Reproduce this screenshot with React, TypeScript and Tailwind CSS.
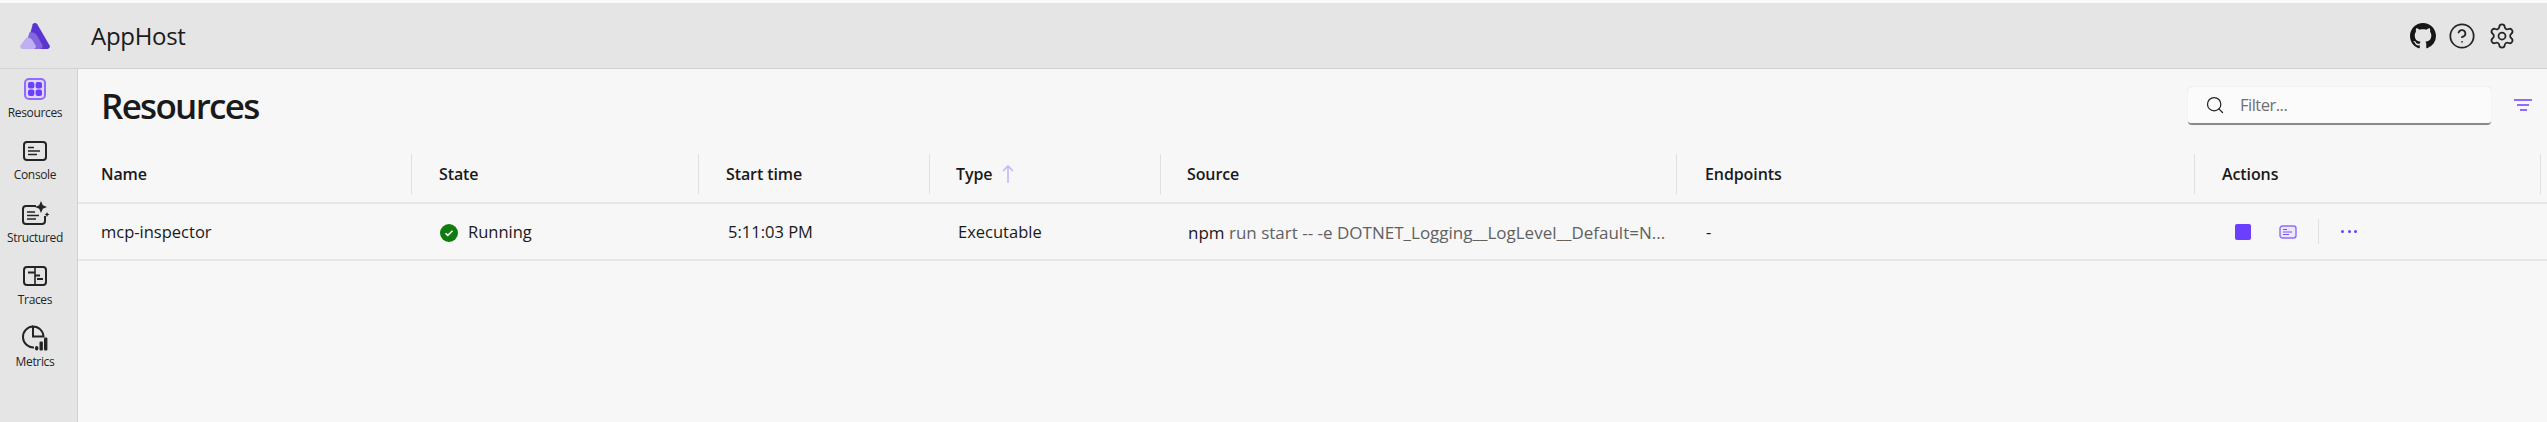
import { CircleHelp, Search, Settings } from "lucide-react";
import React from "react";

const gridCols =
  "grid grid-cols-[333px_287px_231px_231px_516px_518px_346px_1fr]";

const ResourcesIcon = () => (
  <svg width="24" height="24" viewBox="0 0 24 24" fill="none">
    <rect x="2" y="2" width="20" height="20" rx="4" stroke="#8f6bff" strokeWidth="2" fill="#e0d8fb" />
    <rect x="5" y="5" width="6.4" height="6.4" rx="2" fill="#6c3fff" />
    <rect x="12.6" y="5" width="6.4" height="6.4" rx="2" fill="#6c3fff" />
    <rect x="5" y="12.6" width="6.4" height="6.4" rx="2" fill="#6c3fff" />
    <rect x="12.6" y="12.6" width="6.4" height="6.4" rx="2" fill="#6c3fff" />
  </svg>
);

const ConsoleIcon = () => (
  <svg width="26" height="24" viewBox="0 0 26 24" fill="none" stroke="#242424" strokeWidth="2">
    <rect x="2" y="3" width="22" height="18" rx="3" />
    <path d="M6 8.5h6M6 12h12M6 15.5h9" strokeWidth="1.6" />
  </svg>
);

const StructuredIcon = () => (
  <svg width="30" height="26" viewBox="0 0 30 26" fill="none">
    <path d="M16 5H6a3 3 0 0 0-3 3v12a3 3 0 0 0 3 3h16a3 3 0 0 0 3-3v-5" stroke="#242424" strokeWidth="2" />
    <path d="M7 11h8M7 14.5h12M7 18h9" stroke="#242424" strokeWidth="1.6" />
    <path d="M21 0l1.8 4.2L27 6l-4.2 1.8L21 12l-1.8-4.2L15 6l4.2-1.8z" fill="#242424" />
    <path d="M27 11l.8 1.7 1.7.8-1.7.8-.8 1.7-.8-1.7-1.7-.8 1.7-.8z" fill="#242424" />
  </svg>
);

const TracesIcon = () => (
  <svg width="26" height="24" viewBox="0 0 26 24" fill="none" stroke="#242424" strokeWidth="2">
    <rect x="2" y="3" width="22" height="18" rx="3" />
    <path d="M13 3v18" strokeWidth="1.6" />
    <path d="M6 8.5h7M13 11.5h5M15 15h6" strokeWidth="2" />
  </svg>
);

const MetricsIcon = () => (
  <svg width="28" height="28" viewBox="0 0 28 28" fill="none">
    <path d="M12 2.5a10.5 10.5 0 1 0 1 21" stroke="#242424" strokeWidth="2" />
    <path d="M12 2.5v10h10.5A10.5 10.5 0 0 0 12 2.5z" stroke="#242424" strokeWidth="2" />
    <rect x="14" y="22" width="3.4" height="4.5" rx="1.7" fill="#242424" />
    <rect x="18.5" y="17.5" width="3.4" height="9" rx="1" fill="#242424" />
    <rect x="23" y="13.5" width="3.4" height="13" rx="1" fill="#242424" />
  </svg>
);

const Logo = () => (
  <svg width="30" height="26" viewBox="0 0 30 26">
    <path d="M12.7 1.3a2.7 2.7 0 0 1 4.6 0l12.3 21.2A2.4 2.4 0 0 1 27.5 26H6z" fill="#5a35cf" />
    <path d="M9.6 9.2H11c3 0 4.8 1.2 6.3 3.8l5 8.8A2.8 2.8 0 0 1 20 26H4z" fill="#8467e0" />
    <path d="M6.4 14.6H7c3 0 4.8 1.4 6.2 3.8l2.4 4A2.4 2.4 0 0 1 13.4 26H2.6A2.4 2.4 0 0 1 .5 22.4z" fill="#bfaff2" />
  </svg>
);

const GithubIcon = () => (
  <svg width="26" height="26" viewBox="0 0 16 16" fill="#161616">
    <path d="M8 0C3.58 0 0 3.58 0 8c0 3.54 2.29 6.53 5.47 7.59.4.07.55-.17.55-.38 0-.19-.01-.82-.01-1.49-2.01.37-2.53-.49-2.69-.94-.09-.23-.48-.94-.82-1.13-.28-.15-.68-.52-.01-.53.63-.01 1.08.58 1.23.82.72 1.21 1.87.87 2.33.66.07-.52.28-.87.51-1.07-1.78-.2-3.64-.89-3.64-3.95 0-.87.31-1.59.82-2.15-.08-.2-.36-1.02.08-2.12 0 0 .67-.21 2.2.82.64-.18 1.32-.27 2-.27s1.36.09 2 .27c1.53-1.04 2.2-.82 2.2-.82.44 1.1.16 1.92.08 2.12.51.56.82 1.27.82 2.15 0 3.07-1.87 3.75-3.65 3.95.29.25.54.73.54 1.48 0 1.07-.01 1.93-.01 2.2 0 .21.15.46.55.38A8.01 8.01 0 0 0 16 8c0-4.42-3.58-8-8-8z" />
  </svg>
);

const NavItem = ({ icon, label }: { icon: React.ReactNode; label: string }) => (
  <div className="flex h-[62.3px] flex-col items-center">
    <div className="flex h-[30px] items-center justify-center">{icon}</div>
    <span className="mt-[1px] text-[12px] leading-[16px] tracking-[-0.35px] text-[#242424]">{label}</span>
  </div>
);

const HeaderCell = ({ label, pad, first, children }: { label: string; pad: string; first?: boolean; children?: React.ReactNode }) => (
  <div className={`flex h-[40px] items-center ${pad} ${first ? "" : "border-l border-[#e0e0e0]"}`}>
    <span className="text-[16px] font-semibold tracking-[-0.1px] text-[#1a1a1a]">{label}</span>
    {children}
  </div>
);

const App = () => {
  return (
    <div className="flex h-[422px] w-full flex-col overflow-hidden bg-[#f7f7f7] font-['Open_Sans',sans-serif] text-[#1a1a1a]">
      <div className="h-[3px] bg-[#fafafa]" />
      <header className="flex h-[66px] shrink-0 items-center border-b border-[#d2d2d2] bg-[#e5e5e5]">
        <div className="flex w-[50px] justify-end">
          <Logo />
        </div>
        <span className="ml-[41px] text-[24px] tracking-[-0.3px]">AppHost</span>
        <div className="ml-auto flex items-center gap-[12px] pr-[31px]">
          <GithubIcon />
          <CircleHelp size={28} strokeWidth={1.5} color="#242424" />
          <Settings size={28} strokeWidth={1.5} color="#242424" />
        </div>
      </header>
      <div className="flex min-h-0 flex-1">
        <aside className="flex w-[78px] shrink-0 flex-col border-r border-[#d2d2d2] bg-[#e5e5e5] pr-[7px] pt-[5px]">
          <NavItem icon={<ResourcesIcon />} label="Resources" />
          <NavItem icon={<ConsoleIcon />} label="Console" />
          <NavItem icon={<StructuredIcon />} label="Structured" />
          <NavItem icon={<TracesIcon />} label="Traces" />
          <NavItem icon={<MetricsIcon />} label="Metrics" />
        </aside>
        <main className="min-w-0 flex-1">
          <div className="flex h-[85px] items-start pl-[23px] pr-[15px]">
            <h1 className="mt-[13px] text-[35px] font-semibold leading-[48px] tracking-[-1.7px]">Resources</h1>
            <div className="ml-auto mt-[18px] flex h-[38px] w-[303px] items-center rounded-[4px] border-b-2 border-b-[#8a8a8a] bg-[#fbfbfb] pl-[17px] shadow-[0_0_1px_rgba(0,0,0,0.2)]">
              <Search size={20} strokeWidth={1.5} color="#242424" />
              <span className="ml-[15px] text-[16.5px] tracking-[-0.5px] text-[#707070]">Filter...</span>
            </div>
            <div className="ml-[23px] mt-[30px] flex w-[18px] flex-col items-center gap-[3px]">
              <div className="h-[2px] w-[18px] bg-[#8f6bff]" />
              <div className="h-[2px] w-[12px] bg-[#8f6bff]" />
              <div className="h-[2px] w-[7px] bg-[#8f6bff]" />
            </div>
          </div>
          <div className={`${gridCols} h-[50px] border-b-2 border-[#e6e6e6] items-start`}>
            <HeaderCell label="Name" pad="pl-[23px]" first />
            <HeaderCell label="State" pad="pl-[27px]" />
            <HeaderCell label="Start time" pad="pl-[27px]" />
            <HeaderCell label="Type" pad="pl-[26px]">
              <svg width="12" height="18" viewBox="0 0 12 18" fill="none" stroke="#c4b3ff" strokeWidth="1.5" className="ml-[10px]">
                <path d="M6 1v17M1 6l5-5 5 5" />
              </svg>
            </HeaderCell>
            <HeaderCell label="Source" pad="pl-[26px]" />
            <HeaderCell label="Endpoints" pad="pl-[28px]" />
            <HeaderCell label="Actions" pad="pl-[27px]" />
            <div className="h-[40px] border-l border-[#e0e0e0]" />
          </div>
          <div className={`${gridCols} h-[57px] items-center border-b-2 border-[#e6e6e6] text-[16.5px]`}>
            <div className="pl-[23px] pt-[2px]">mcp-inspector</div>
            <div className="flex items-center pl-[29px] pt-[2px]">
              <svg width="18" height="18" viewBox="0 0 18 18">
                <circle cx="9" cy="9" r="9" fill="#107c10" />
                <path d="M5.5 9.2 7.8 11.4 12.5 6.8" fill="none" stroke="#fff" strokeWidth="1.5" />
              </svg>
              <span className="ml-[10px]">Running</span>
            </div>
            <div className="pl-[30px] pt-[2px]">5:11:03 PM</div>
            <div className="pl-[29px] pt-[2px]">Executable</div>
            <div className="truncate pl-[28px] pt-[2px] text-[17px] text-[#616161]">
              <span className="text-[#1a1a1a]">npm</span> run start -- -e DOTNET_Logging__LogLevel__Default=N...
            </div>
            <div className="pl-[30px] pt-[2px]">-</div>
            <div className="flex items-center pl-[41px]">
              <div className="h-[16px] w-[16px] rounded-[2px] bg-[#6c3fff]" />
              <svg width="18" height="14" viewBox="0 0 18 14" fill="none" className="ml-[28px]">
                <rect x="1" y="1" width="16" height="12" rx="2.5" stroke="#8f6bff" strokeWidth="1.4" fill="#ece6ff" />
                <path d="M4 4.5h4M4 7h9M4 9.5h6" stroke="#7a52ff" strokeWidth="1.1" />
              </svg>
              <div className="ml-[21px] h-[25px] w-px bg-[#e0e0e0]" />
              <div className="ml-[22px] flex gap-[3.5px]">
                <div className="h-[3px] w-[3px] rounded-full bg-[#6c3fff]" />
                <div className="h-[3px] w-[3px] rounded-full bg-[#6c3fff]" />
                <div className="h-[3px] w-[3px] rounded-full bg-[#6c3fff]" />
              </div>
            </div>
            <div />
          </div>
        </main>
      </div>
    </div>
  );
};

export default App;
